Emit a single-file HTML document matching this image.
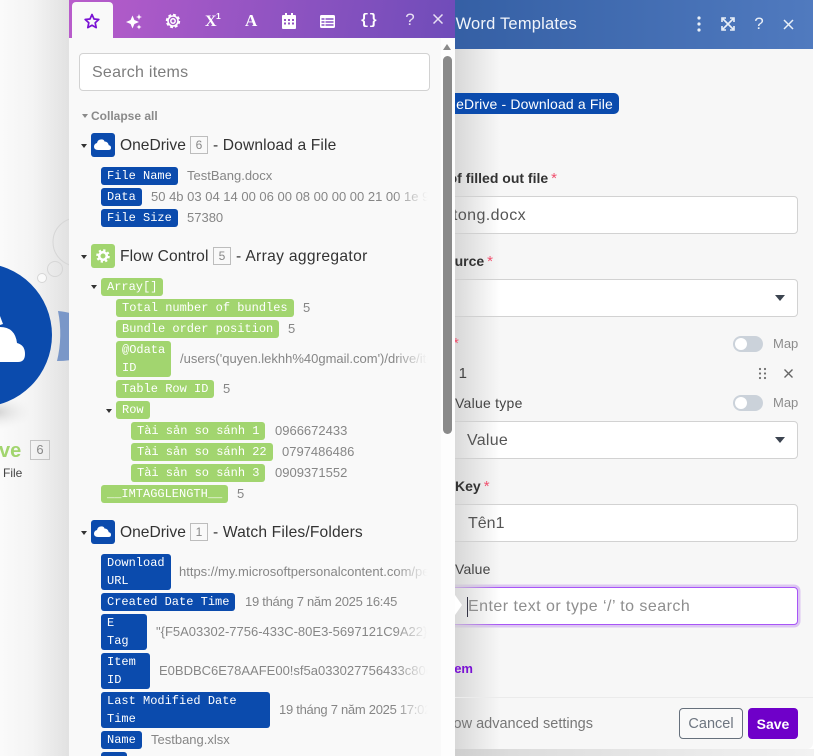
<!DOCTYPE html>
<html><head><meta charset="utf-8">
<style>
*{box-sizing:border-box}
html,body{margin:0;padding:0;width:814px;height:756px;overflow:hidden;background:#fff;font-family:"Liberation Sans","Noto Sans CJK SC",sans-serif}
.a{position:absolute;white-space:nowrap}
#left{position:absolute;left:0;top:0;width:80px;height:756px;background:linear-gradient(90deg,#fafafa 0,#f4f4f4 40%,#dcdcdc 100%)}
#right{position:absolute;left:380px;top:0;width:433px;height:749px;background:#f7f7f7;border-radius:0 0 6px 0;overflow:hidden}
#rshadow{position:absolute;left:380px;top:749px;width:434px;height:7px;background:linear-gradient(90deg,#bbb,#dcdcdc 30%,#f2f2f2)}
#rhead{position:absolute;left:0;top:0;width:433px;height:49px;background:linear-gradient(90deg,#2f5a9f,#507abf)}
.rt{position:absolute;white-space:nowrap;color:#333;font-size:14px;line-height:18px}
#right .a,#right .rt,#right .arrow,#right .tog,#right .map,#right .ic{z-index:2}
.b{font-weight:700}
.req{color:#f0506e;font-weight:400;font-size:15px;margin-left:3px}
.inp{position:absolute;left:-20px;width:438px;height:38px;background:#fff;border:1px solid #d2d2d2;border-radius:4px}
.arrow{position:absolute;width:0;height:0;border-left:5.5px solid transparent;border-right:5.5px solid transparent;border-top:6px solid #3c4450}
.tog{position:absolute;width:30px;height:16px;border-radius:8px;background:#cbd2da}
.tog i{position:absolute;left:2px;top:2px;width:12px;height:12px;border-radius:50%;background:#fff}
.map{position:absolute;font-size:13px;color:#8c8c8c;line-height:16px}
#rfade{position:absolute;left:75px;top:49px;width:45px;height:700px;z-index:1;background:linear-gradient(90deg,rgba(205,205,205,.75),rgba(247,247,247,0))}
#pop{position:absolute;left:69px;top:0;width:386px;height:756px;background:#f9f9f9;overflow:hidden;z-index:10}
#phead{position:absolute;left:0;top:0;width:386px;height:38px;background:linear-gradient(100deg,#b95ccb 0,#9a56c4 40%,#6f4cb9 100%)}
#tab{position:absolute;left:3px;top:2px;width:41px;height:36px;background:#f9f9f9;border-radius:4px 4px 0 0}
.ic{position:absolute;display:block}
.t{position:absolute;font:12px/18px "Liberation Mono",monospace;color:#fff;padding:0 6px;border-radius:3px;white-space:pre}
.bl{background:#0b4bad}
.gr{background:#a2d56f}
.v{position:absolute;font-size:13px;line-height:18px;color:#868686;white-space:nowrap}
.h{position:absolute;font-size:15.6px;line-height:24px;color:#333;white-space:nowrap}
.n{position:absolute;width:18px;height:18px;border:1px solid #bdbdbd;font-size:12px;line-height:16px;text-align:center;color:#888}
.tri{position:absolute;width:0;height:0;border-left:3.5px solid transparent;border-right:3.5px solid transparent;border-top:4px solid #333}
.sq{position:absolute;left:22px;width:24px;height:24px;border-radius:3px}
#fade{position:absolute;left:325px;top:125px;width:48px;height:631px;background:linear-gradient(90deg,rgba(249,249,249,0),#f9f9f9 70%)}
</style></head>
<body>
<div id="left">
<svg width="80" height="756" style="position:absolute;left:0;top:0">
<defs><radialGradient id="s"><stop offset="0" stop-color="#cfcfcf"/><stop offset="1" stop-color="#f2f2f2" stop-opacity="0"/></radialGradient></defs>
<ellipse cx="-5" cy="412" rx="40" ry="18" fill="url(#s)"/>
<circle cx="77" cy="242" r="24" fill="none" stroke="#d6d6d6" stroke-width="1"/>
<circle cx="55" cy="269" r="7.5" fill="none" stroke="#d6d6d6" stroke-width="1"/>
<circle cx="42" cy="278" r="4.5" fill="#fafafa" stroke="#d6d6d6" stroke-width="1"/>
<path d="M58 311Q72 312 80 318V358Q70 361 57 361Q63 336 58 311Z" fill="#7a97c8"/>
<circle cx="-20" cy="335" r="72" fill="#0b4bad"/>
<path d="M-10 362H18Q25 362 25 354Q25 345 17 343Q15 327 0 327Q-10 327 -14 340Q-20 345 -20 362Z" fill="#fff"/>
<path d="M0 325L3 324L0 316Z" fill="#fff"/>
</svg>
<div class="a b" style="left:-1px;top:440px;font-size:20px;line-height:22px;color:#a2d56f;font-weight:700">ve</div>
<div class="a" style="left:30px;top:440px;width:20px;height:20px;border:1px solid #c4c4c4;font-size:13px;line-height:18px;text-align:center;color:#888">6</div>
<div class="a" style="left:3px;top:465px;font-size:12px;line-height:16px;color:#444">File</div>
</div>

<div id="right">
<div id="rhead">
<div class="a" style="right:236px;top:13px;font-size:16.5px;line-height:22px;color:#f2f5fb;letter-spacing:.2px">Word Templates</div>
<svg class="ic" style="left:315px;top:14px" width="10" height="20"><circle cx="4" cy="4" r="1.6" fill="#eaf0f8"/><circle cx="4" cy="10" r="1.6" fill="#eaf0f8"/><circle cx="4" cy="16" r="1.6" fill="#eaf0f8"/></svg>
<svg class="ic" style="left:341px;top:17px" width="14" height="14" fill="none" stroke="#eaf0f8" stroke-width="1.6"><path d="M1 5V1H5M9 1H13V5M13 9V13H9M5 13H1V9M2 2L12 12M12 2L2 12"/></svg>
<div class="a" style="left:373px;top:13px;font-size:17px;line-height:22px;color:#eaf0f8;width:12px;text-align:center">?</div>
<svg class="ic" style="left:403px;top:19px" width="11" height="11" stroke="#eaf0f8" stroke-width="1.5"><path d="M1 1L10 10M10 1L1 10"/></svg>
</div>
<div class="a" style="right:194px;top:93px;height:21px;background:#0b4bad;color:#fff;font-size:14px;line-height:22px;padding:0 6px;border-radius:5px;letter-spacing:.15px">OneDrive - Download a File</div>
<div class="rt b" style="right:256px;top:169px">Name of filled out file<span class="req">*</span></div>
<div class="inp" style="top:196px"></div>
<div class="a" style="right:287px;top:206px;font-size:16px;line-height:20px;color:#555;letter-spacing:.4px">tong.docx</div>
<div class="rt b" style="right:320px;top:252px">Source<span class="req">*</span></div>
<div class="inp" style="top:279px"></div>
<div class="arrow" style="left:395px;top:295px"></div>
<div class="rt" style="left:73px;top:335px;font-size:15px;color:#f0506e">*</div>
<div class="tog" style="left:353px;top:336px"><i></i></div>
<div class="map" style="left:393px;top:336px">Map</div>
<div class="rt" style="right:346px;top:365px;color:#444;font-size:15px">Item 1</div>
<svg class="ic" style="left:378px;top:367px" width="10" height="13" fill="#6f6f6f"><circle cx="2" cy="2" r="1.1"/><circle cx="7" cy="2" r="1.1"/><circle cx="2" cy="6.5" r="1.1"/><circle cx="7" cy="6.5" r="1.1"/><circle cx="2" cy="11" r="1.1"/><circle cx="7" cy="11" r="1.1"/></svg>
<svg class="ic" style="left:404px;top:369px" width="9" height="9" stroke="#666" stroke-width="1.4"><path d="M.5.5L8.5 8.5M8.5.5L.5 8.5"/></svg>
<div class="rt" style="left:75px;top:394px;color:#444;letter-spacing:.25px">Value type</div>
<div class="tog" style="left:353px;top:395px"><i></i></div>
<div class="map" style="left:393px;top:395px">Map</div>
<div class="inp" style="top:421px"></div>
<div class="a" style="left:87px;top:431px;font-size:16px;line-height:20px;color:#555;letter-spacing:.25px">Value</div>
<div class="arrow" style="left:395px;top:437px"></div>
<div class="rt b" style="left:75px;top:477px">Key<span class="req">*</span></div>
<div class="inp" style="top:504px"></div>
<div class="a" style="left:88px;top:514px;font-size:16px;line-height:20px;color:#555">Tên1</div>
<div class="rt" style="left:75px;top:560px;color:#444;letter-spacing:.15px">Value</div>
<div class="inp" style="top:587px;height:38px;border:1.5px solid #a855f7;box-shadow:0 0 0 2.5px #dcc6f2"></div>
<div class="a" style="left:87px;top:597px;width:1px;height:20px;background:#334"></div>
<div class="a" style="left:88px;top:597px;font-size:16px;line-height:20px;color:#8e8e8e;letter-spacing:.46px">Enter text or type ‘/’ to search</div>
<svg class="ic" style="left:75px;top:595px" width="8" height="20"><path d="M0 0L7 10L0 20Z" fill="#fff"/></svg>
<div class="a b" style="right:340px;top:661px;font-size:13px;line-height:16px;color:#7a12d4">Add item</div>
<div class="a" style="left:0;top:697px;width:433px;height:1px;background:#ebebeb"></div>
<div class="a" style="right:220px;top:715px;font-size:14.5px;line-height:18px;color:#777">Show advanced settings</div>
<div class="a" style="left:299px;top:708px;width:64px;height:31px;border:1px solid #66707c;border-radius:4px;background:#f9f9f9;font-size:14.5px;line-height:31px;text-align:center;color:#6d7580">Cancel</div>
<div class="a b" style="left:368px;top:708px;width:50px;height:31px;border-radius:4px;background:#6f00c9;font-size:14px;line-height:33px;text-align:center;color:#fff">Save</div>
<div id="rfade"></div>
</div>
<div id="rshadow"></div>

<div id="pop">
<div id="phead"></div>
<div id="tab"></div>
<svg class="ic" style="left:15px;top:13px" width="16" height="16" fill="none" stroke="#7a12d4" stroke-width="1.7" stroke-linejoin="round"><path d="M8 1.5L10 6L14.8 6.5L11.2 9.8L12.2 14.6L8 12.2L3.8 14.6L4.8 9.8L1.2 6.5L6 6Z"/></svg>
<svg class="ic" style="left:57px;top:13px" width="16" height="17" fill="#fff"><path d="M6.5 2.5L8.4 7L13 9L8.4 11L6.5 15.5L4.6 11L0 9L4.6 7Z"/><path d="M13 1L13.8 3.2L16 4L13.8 4.8L13 7L12.2 4.8L10 4L12.2 3.2Z"/><path d="M13 11.5L13.7 13.3L15.5 14L13.7 14.7L13 16.5L12.3 14.7L10.5 14L12.3 13.3Z"/></svg>
<svg class="ic" style="left:96px;top:13px" width="16" height="16" fill="none" stroke="#fff"><circle cx="8" cy="8" r="5" stroke-width="1.6"/><circle cx="8" cy="8" r="2.2" stroke-width="1.5"/><circle cx="8" cy="8" r="6.4" stroke-width="1.6" stroke-dasharray="3 2"/></svg>
<div class="a b" style="left:136px;top:12px;font:700 16px/20px 'Liberation Serif',serif;color:#fff">X</div>
<div class="a b" style="left:147px;top:10px;font:700 8.5px/12px 'Liberation Sans',sans-serif;color:#fff">1</div>
<div class="a b" style="left:176px;top:11px;font:700 17px/20px 'Liberation Serif',serif;color:#fff">A</div>
<svg class="ic" style="left:213px;top:13px" width="14" height="16" fill="#fff"><path d="M3 0h2v2h4V0h2v2h2a1 1 0 0 1 1 1v12a1 1 0 0 1-1 1H1a1 1 0 0 1-1-1V3a1 1 0 0 1 1-1h2z"/><g fill="#9455c2"><rect x="2" y="6" width="2" height="2"/><rect x="6" y="6" width="2" height="2"/><rect x="10" y="6" width="2" height="2"/><rect x="2" y="9.5" width="2" height="2"/><rect x="6" y="9.5" width="2" height="2"/><rect x="10" y="9.5" width="2" height="2"/></g></svg>
<svg class="ic" style="left:251px;top:15px" width="15" height="13"><rect width="15" height="13" rx="1.5" fill="#fff"/><g fill="#a47ad2"><rect x="1.5" y="3" width="3" height="2"/><rect x="5.5" y="3" width="8" height="2"/><rect x="1.5" y="6" width="3" height="2"/><rect x="5.5" y="6" width="8" height="2"/><rect x="1.5" y="9" width="3" height="2"/><rect x="5.5" y="9" width="8" height="2"/></g></svg>
<div class="a" style="left:291px;top:11px;font:700 15px/20px 'Liberation Mono',monospace;color:#fff;letter-spacing:-.3px">{}</div>
<div class="a" style="left:335px;top:9px;font-size:17px;line-height:22px;color:#e8e0f4;width:12px;text-align:center">?</div>
<svg class="ic" style="left:364px;top:14px" width="10" height="10" stroke="#e8e0f4" stroke-width="1.5"><path d="M.5.5L9.5 9.5M9.5.5L.5 9.5"/></svg>

<div class="a" style="left:10px;top:53px;width:351px;height:38px;background:#fff;border:1px solid #d2d2d2;border-radius:4px;font-size:16px;line-height:38px;padding-left:12px;color:#7d7d7d;letter-spacing:.25px">Search items</div>
<div class="tri" style="left:13px;top:114px;border-top-color:#8a8a8a"></div>
<div class="a b" style="left:22px;top:108px;font-size:12px;line-height:16px;color:#8a8a8a">Collapse all</div>

<div class="tri" style="left:12px;top:144px"></div>
<div class="sq" style="top:133px;background:#0b4bad"></div>
<svg class="ic" style="left:25px;top:139px" width="17" height="11" fill="#fff"><path d="M4 11H14.5Q17 11 17 8.7Q17 6.6 14.8 6.3Q14 2.5 10.5 2.5Q9.8 0 6.5 .5Q3.5 1 3 4Q0 4.8 0 7.8Q0 11 4 11Z"/></svg>
<div class="h" style="left:51px;top:134px">OneDrive</div><div class="n" style="left:121px;top:136px">6</div><div class="h" style="left:144px;top:134px;letter-spacing:.12px">- Download a File</div>
<div class="t bl" style="left:32px;top:167px">File Name</div><div class="v" style="left:118px;top:167px">TestBang.docx</div>
<div class="t bl" style="left:32px;top:188px">Data</div><div class="v" style="left:82px;top:188px">50 4b 03 04 14 00 06 00 08 00 00 00 21 00 1e 9f</div>
<div class="t bl" style="left:32px;top:209px">File Size</div><div class="v" style="left:118px;top:209px">57380</div>

<div class="tri" style="left:12px;top:255px"></div>
<div class="sq" style="top:244px;background:#a2d56f"></div>
<svg class="ic" style="left:27px;top:249px" width="14" height="14" fill="none" stroke="#fff"><circle cx="7" cy="7" r="3.8" stroke-width="2.6"/><circle cx="7" cy="7" r="5.6" stroke-width="2.4" stroke-dasharray="2.2 2.2"/></svg>
<div class="h" style="left:51px;top:245px;letter-spacing:.08px">Flow Control</div><div class="n" style="left:144px;top:247px">5</div><div class="h" style="left:167px;top:245px;letter-spacing:.33px">- Array aggregator</div>

<div class="tri" style="left:22px;top:285px"></div>
<div class="t gr" style="left:32px;top:278px">Array[]</div>
<div class="t gr" style="left:47px;top:299px">Total number of bundles</div><div class="v" style="left:234px;top:299px">5</div>
<div class="t gr" style="left:47px;top:320px">Bundle order position</div><div class="v" style="left:219px;top:320px">5</div>
<div class="t gr" style="left:47px;top:341px">@Odata
ID</div><div class="v" style="left:111px;top:350px">/users('quyen.lekhh%40gmail.com')/drive/items</div>
<div class="t gr" style="left:47px;top:380px">Table Row ID</div><div class="v" style="left:154px;top:380px">5</div>
<div class="tri" style="left:37px;top:409px"></div>
<div class="t gr" style="left:47px;top:401px">Row</div>
<div class="t gr" style="left:62px;top:422px">Tài sản so sánh 1</div><div class="v" style="left:206px;top:422px">0966672433</div>
<div class="t gr" style="left:62px;top:443px">Tài sản so sánh 22</div><div class="v" style="left:213px;top:443px">0797486486</div>
<div class="t gr" style="left:62px;top:464px">Tài sản so sánh 3</div><div class="v" style="left:206px;top:464px">0909371552</div>
<div class="t gr" style="left:32px;top:485px">__IMTAGGLENGTH__</div><div class="v" style="left:168px;top:485px">5</div>

<div class="tri" style="left:12px;top:531px"></div>
<div class="sq" style="top:520px;background:#0b4bad"></div>
<svg class="ic" style="left:25px;top:526px" width="17" height="11" fill="#fff"><path d="M4 11H14.5Q17 11 17 8.7Q17 6.6 14.8 6.3Q14 2.5 10.5 2.5Q9.8 0 6.5 .5Q3.5 1 3 4Q0 4.8 0 7.8Q0 11 4 11Z"/></svg>
<div class="h" style="left:51px;top:521px">OneDrive</div><div class="n" style="left:121px;top:523px">1</div><div class="h" style="left:144px;top:521px;letter-spacing:.15px">- Watch Files/Folders</div>

<div class="t bl" style="left:32px;top:554px">Download
URL</div><div class="v" style="left:110px;top:563px">https://my.microsoftpersonalcontent.com/personal</div>
<div class="t bl" style="left:32px;top:593px">Created Date Time</div><div class="v" style="left:176px;top:593px;letter-spacing:-.28px">19 tháng 7 năm 2025 16:45</div>
<div class="t bl" style="left:32px;top:614px;width:46px">E
Tag</div><div class="v" style="left:87px;top:623px">"{F5A03302-7756-433C-80E3-5697121C9A22},1"</div>
<div class="t bl" style="left:32px;top:653px;width:49px">Item
ID</div><div class="v" style="left:90px;top:662px">E0BDBC6E78AAFE00!sf5a033027756433c80e35697</div>
<div class="t bl" style="left:32px;top:692px;width:169px">Last Modified Date
Time</div><div class="v" style="left:210px;top:701px;letter-spacing:-.28px">19 tháng 7 năm 2025 17:02</div>
<div class="t bl" style="left:32px;top:731px">Name</div><div class="v" style="left:82px;top:731px">Testbang.xlsx</div>
<div class="t bl" style="left:32px;top:752px">ID</div>

<div id="fade"></div>
<div class="a" style="left:372px;top:38px;width:14px;height:718px;background:#fdfdfd"></div>
<div class="a" style="left:374px;top:44px;width:0;height:0;border-left:4.5px solid transparent;border-right:4.5px solid transparent;border-bottom:6px solid #8a8a8a"></div>
<div class="a" style="left:374px;top:56px;width:9px;height:378px;background:#8a8a8a;border-radius:5px"></div>
</div>
</body></html>
